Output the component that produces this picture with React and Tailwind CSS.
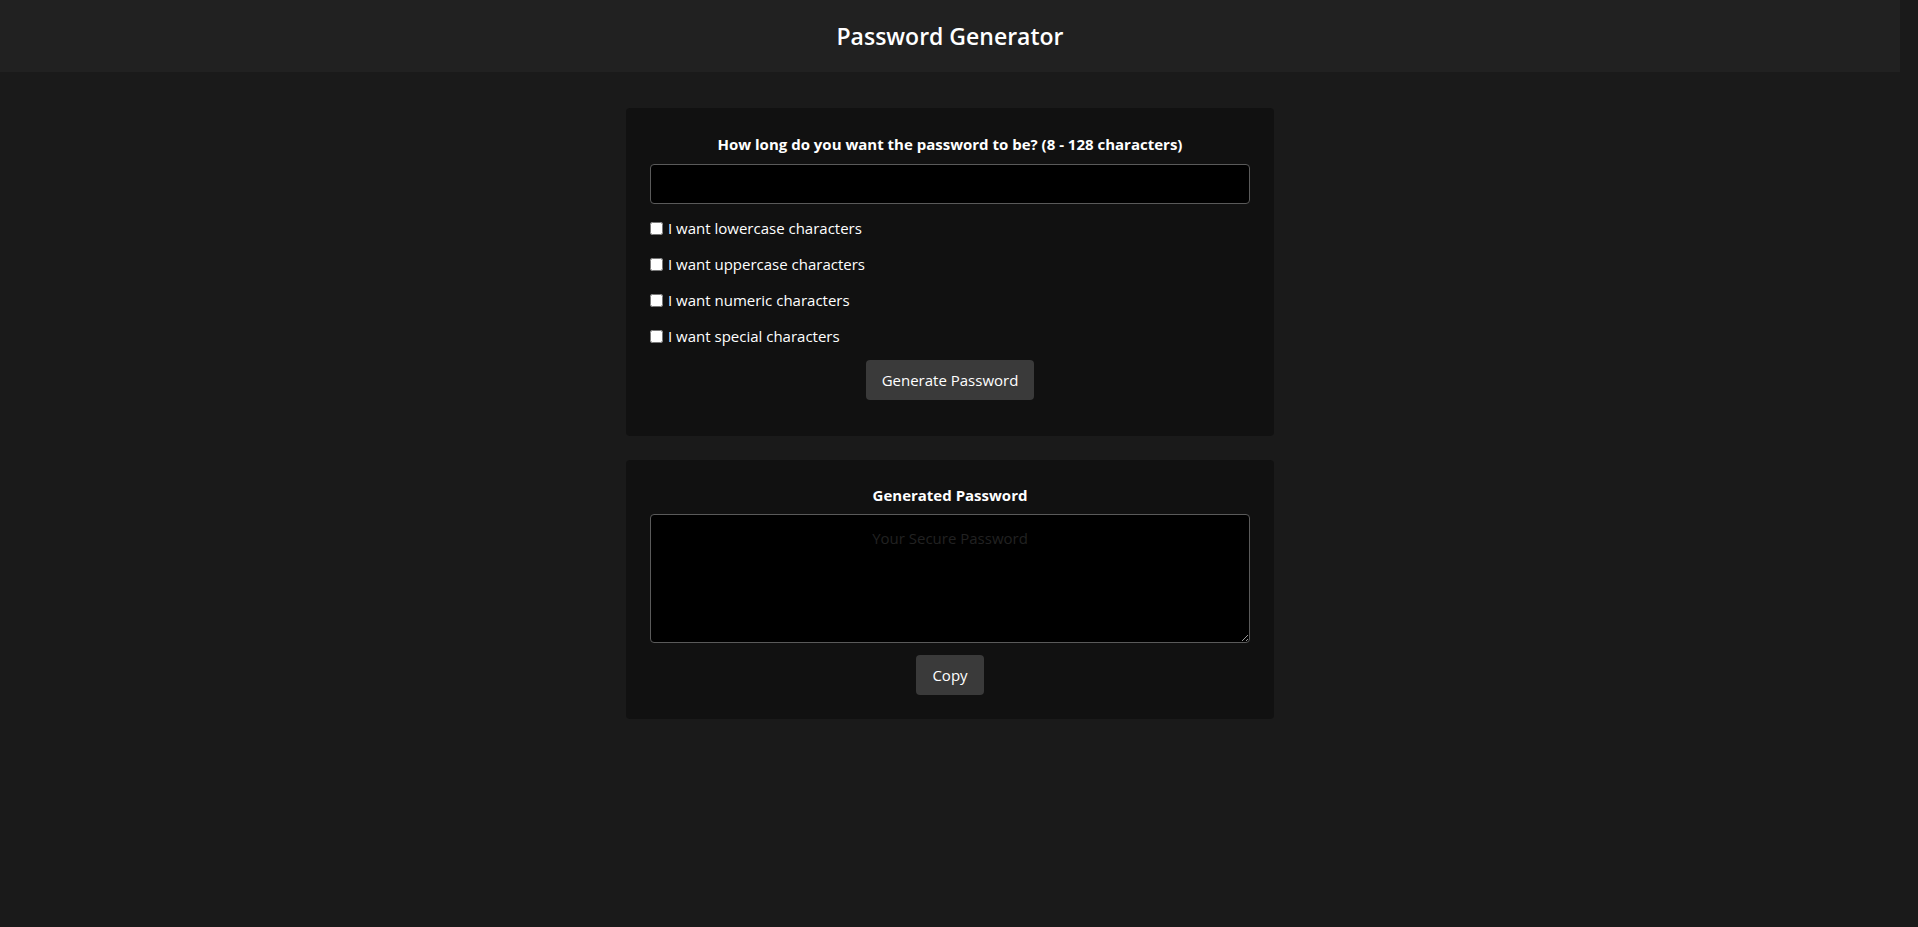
import React, { useState } from 'react';

const options = [
  'I want lowercase characters',
  'I want uppercase characters',
  'I want numeric characters',
  'I want special characters',
];

function App() {
  const [length, setLength] = useState('');
  const [password, setPassword] = useState('');

  return (
    <div className="min-h-screen bg-[#1a1a1a] text-white font-['Segoe_UI','Open_Sans',sans-serif]">
      <div className="w-[calc(100%-18px)]">
        <header className="h-[72px] bg-[#212121] flex items-center justify-center">
          <h1 className="text-[23px] font-semibold">Password Generator</h1>
        </header>

        <main className="flex flex-col items-center pt-9 gap-6">
          <section className="w-[648px] bg-[#111111] rounded p-6 flex flex-col">
            <label className="block text-center font-bold text-[15px] leading-6 mb-2">
              How long do you want the password to be? (8 - 128 characters)
            </label>
            <input
              type="number"
              value={length}
              onChange={(e) => setLength(e.target.value)}
              className="h-10 w-full bg-black border border-[#5a5a5a] rounded text-white px-2"
            />
            <div className="flex flex-col gap-3 mt-3">
              {options.map((o) => (
                <label key={o} className="flex items-center h-6 gap-[5px] text-[15px]">
                  <input type="checkbox" className="w-[13px] h-[13px] m-0" />
                  <span>{o}</span>
                </label>
              ))}
            </div>
            <div className="flex justify-center mt-3 mb-3">
              <button className="h-10 px-4 bg-[#3a3a3a] rounded text-[15px]">Generate Password</button>
            </div>
          </section>

          <section className="w-[648px] bg-[#111111] rounded p-6 flex flex-col">
            <label className="block text-center font-bold text-[15px] leading-[22px] mb-2">Generated Password</label>
            <textarea
              readOnly
              value={password}
              onChange={(e) => setPassword(e.target.value)}
              placeholder="Your Secure Password"
              className="h-[129px] w-full bg-black border border-[#5a5a5a] rounded p-3 text-center text-[15px] leading-[22px] placeholder:text-[#222222]"
            />
            <div className="flex justify-center mt-3">
              <button className="h-10 px-4 bg-[#3a3a3a] rounded text-[15px]">Copy</button>
            </div>
          </section>
        </main>
      </div>
    </div>
  );
}

export default App;
